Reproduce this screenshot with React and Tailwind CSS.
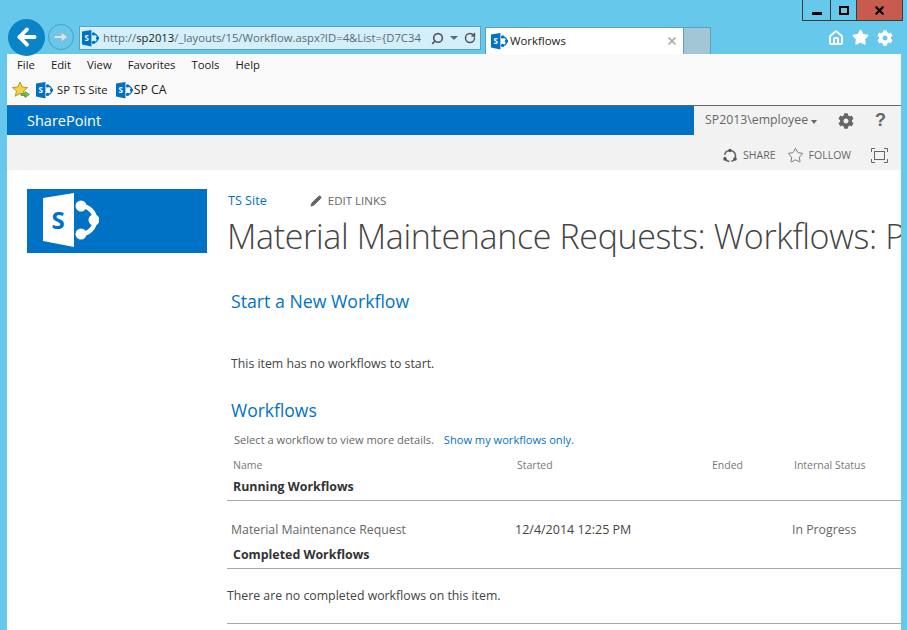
import React from 'react';
import { ArrowLeft, RotateCw, Search, X, Home, Star, Pencil } from 'lucide-react';
import { FaCog } from 'react-icons/fa';

// SharePoint mark: page with letter, plus the three linked dots
function SpLogo({ size = 16, bg = '#0072c6', fg = '#fff', fontSize = 26 }) {
  return (
    <svg width={size} height={size} viewBox="0 0 56 56">
      <path d="M0 5 L31 0 V54 L0 48 Z" fill={bg} />
      <path d="M38 13 A14 14 0 0 1 38 41" fill="none" stroke={bg} strokeWidth="4.5" />
      <circle cx="38" cy="13" r="5.5" fill={bg} />
      <circle cx="51" cy="27" r="5.5" fill={bg} />
      <circle cx="38" cy="41" r="5.5" fill={bg} />
      <text x="15" y="36" fontSize={fontSize} fontWeight="700" fill={fg} textAnchor="middle" fontFamily="Open Sans, sans-serif">S</text>
    </svg>
  );
}

function Section({ title }) {
  return <div className="font-bold text-[12.4px] text-[#333] pl-[6px] leading-[18px]">{title}</div>;
}

export default function App() {
  const sans = { fontFamily: '"Open Sans", sans-serif' };
  return (
    <div className="w-[907px] h-[630px] overflow-hidden bg-[#66c9eb] flex flex-col relative" style={sans}>
      {/* Window buttons */}
      <div className="absolute top-0 right-[4px] flex h-[21px] border border-t-0 border-[#3a3a3a]">
        <div className="w-[28px] flex items-end justify-center pb-[5px] border-r border-[#3a3a3a]"><div className="w-[10px] h-[3px] bg-black" /></div>
        <div className="w-[26px] flex items-center justify-center border-r border-[#3a3a3a]"><div className="w-[10px] h-[9px] border-2 border-black" /></div>
        <div className="w-[45px] bg-[#c75b50] flex items-center justify-center"><X size={13} strokeWidth={4} color="#000" /></div>
      </div>

      {/* Nav row */}
      <div className="h-[54px] flex items-end pl-[8px] shrink-0">
        <div className="flex items-center gap-[3px] mb-[-2px] h-[38px] relative z-10">
          <div className="w-[37px] h-[37px] rounded-full bg-[#0a84c6] flex items-center justify-center">
            <ArrowLeft size={26} strokeWidth={3.5} color="#fff" />
          </div>
          <div className="w-[26px] h-[26px] rounded-full border border-[#4f9cc0] flex items-center justify-center">
            <svg width="18" height="18" viewBox="0 0 18 18"><path d="M2 7.5 H9 V3.5 L16 9 L9 14.5 V10.5 H2 Z" fill="#cfe8f2" stroke="#8fb9cc" strokeWidth="1.2" /></svg>
          </div>
        </div>
        <div className="ml-[5px] mb-[4px] w-[402px] h-[24px] bg-[#d3f0fa] border border-[#5f9fbd] flex items-center pl-[2px] pr-[4px] text-[11.3px]">
          <SpLogo size={17} />
          <div className="ml-[4px] text-[#5d6a70] whitespace-nowrap flex-1 min-w-0">http://<span className="text-[#222]">sp2013</span>/_layouts/15/Workflow.aspx?ID=4&amp;List={'{'}D7C34</div>
          <Search size={13} strokeWidth={3} color="#555" className="-scale-x-100" />
          <div className="ml-[6px] w-0 h-0 border-x-[4px] border-x-transparent border-t-[4px] border-t-[#666]" />
          <RotateCw size={12} strokeWidth={3} color="#555" className="ml-[6px]" />
        </div>
        <div className="ml-[4px] w-[199px] h-[27px] bg-white border border-b-0 border-[#5f9fbd] flex items-center pl-[5px] pr-[5px] text-[11.4px] text-[#222]">
          <SpLogo size={17} />
          <span className="ml-[2px] flex-1">Workflows</span>
          <X size={12} strokeWidth={3.5} color="#aaa" />
        </div>
        <div className="w-[27px] h-[27px] bg-[#a3c6d6] border border-l-0 border-b-0 border-[#5f9fbd]" />
        <div className="flex items-center gap-[8px] ml-[117px] mb-[8px] text-white">
          <Home size={16} strokeWidth={3} />
          <Star size={17} fill="#fff" />
          <FaCog size={16} />
        </div>
      </div>

      {/* Browser content */}
      <div className="ml-[7px] mr-[6px] flex-1 bg-white flex flex-col min-h-0 relative">
        {/* Menu */}
        <div className="h-[51px] bg-[#f9f9f9] shrink-0 text-[11.3px] text-[#1a1a1a]">
          <div className="flex gap-[16px] pl-[10px] h-[22px] items-center">
            <span>File</span><span>Edit</span><span>View</span><span>Favorites</span><span>Tools</span><span>Help</span>
          </div>
          <div className="flex items-center pl-[5px] h-[24px] mt-[2px]">
            <svg width="18" height="18" viewBox="0 0 18 18">
              <path d="M8 1 L10.2 6 L15.5 6.5 L11.5 10 L12.7 15.3 L8 12.5 L3.3 15.3 L4.5 10 L.5 6.5 L5.8 6 Z" fill="#f3d34a" stroke="#b59a2a" />
              <path d="M9 12.5 H13 V10.5 L17.5 13.5 L13 16.5 V14.5 H9 Z" fill="#6cc24a" stroke="#3f8a2a" strokeWidth=".6" />
            </svg>
            <span className="ml-[6px] flex"><SpLogo size={17} /></span>
            <span className="ml-[4px]">SP TS Site</span>
            <span className="ml-[8px] flex"><SpLogo size={17} /></span>
            <span className="ml-[1px] text-[12.3px]">SP CA</span>
          </div>
        </div>
        {/* Suite bar */}
        <div className="h-[30px] shrink-0 flex bg-[#0072c6] border-t border-[#666]">
          <div className="flex-1 pl-[20px] text-white text-[14.5px] leading-[29px]">SharePoint</div>
          <div className="w-[207px] bg-[#f2f2f2] flex items-center pl-[11px] text-[12.3px] text-[#666]">
            <span>SP2013\employee</span>
            <div className="ml-[3px] mt-[2px] w-0 h-0 border-x-[3.5px] border-x-transparent border-t-[4px] border-t-[#666]" />
            <FaCog size={16} color="#666" className="ml-[21px]" />
            <span className="ml-[21px] text-[18px] font-bold text-[#666] [font-family:'Liberation_Sans',sans-serif]">?</span>
          </div>
        </div>
        {/* Ribbon */}
        <div className="h-[35px] shrink-0 bg-[#f2f2f2] flex items-center justify-end pr-[13px] pt-[6px] text-[10.5px] text-[#666]">
          <svg width="16" height="16" viewBox="0 0 16 16" className="mr-[5px]"><circle cx="8" cy="8" r="5.5" fill="none" stroke="#666" strokeWidth="1.6" strokeDasharray="7 2" /><circle cx="3" cy="11" r="1.8" fill="#555" /><circle cx="13" cy="11" r="1.8" fill="#555" /><circle cx="8" cy="2.5" r="1.8" fill="#555" /></svg>
          <span>SHARE</span>
          <Star size={17} strokeWidth={1.2} className="ml-[11px] mr-[5px]" />
          <span>FOLLOW</span>
          <svg width="17" height="15" viewBox="0 0 17 15" className="ml-[20px]" fill="none" stroke="#666"><rect x="3.5" y="3.5" width="10" height="8" /><path d="M.5 4V.5H4M13 .5h3.5V4M.5 11v3.5H4M13 14.5h3.5V11" /></svg>
        </div>
        {/* Page */}
        <div className="flex-1 flex min-h-0 overflow-hidden">
          <div className="w-[220px] shrink-0 pl-[20px] pt-[19px]">
            <div className="w-[180px] h-[64px] bg-[#0072c6] flex items-center pl-[16px]"><SpLogo size={56} bg="#fff" fg="#0072c6" fontSize={24} /></div>
          </div>
          <div className="flex-1 min-w-0 text-[#444]">
            <div className="flex items-center h-[18px] mt-[22px] text-[12.6px]">
              <span className="ml-[1px] text-[#0072c6]">TS Site</span>
              <Pencil size={12} fill="#666" color="#666" className="ml-[43px]" />
              <span className="ml-[6px] text-[11.5px] text-[#666]">EDIT LINKS</span>
            </div>
            <div className="text-[34px] tracking-[-0.35px] leading-[48px] whitespace-nowrap text-[#444] font-light mt-[2px]">Material Maintenance Requests: Workflows: P</div>
            <div className="ml-[4px] mt-[28px] text-[17.7px] leading-[26px] text-[#0072c6]">Start a New Workflow</div>
            <div className="ml-[4px] mt-[41px] text-[12.3px] leading-[18px]">This item has no workflows to start.</div>
            <div className="ml-[4px] mt-[24px] text-[17.5px] leading-[26px] text-[#0072c6]">Workflows</div>
            <div className="ml-[7px] mt-[9px] text-[11.1px] leading-[16px] text-[#666]">Select a workflow to view more details. <span className="ml-[7px] text-[#0072c6]">Show my workflows only.</span></div>
            <div className="grid grid-cols-[284px_195px_82px_1fr] mt-[9px] text-[10.5px] text-[#777] leading-[16px] pl-[6px]">
              <span>Name</span><span>Started</span><span>Ended</span><span>Internal Status</span>
            </div>
            <div className="mt-[5px]"><Section title="Running Workflows" /></div>
            <div className="border-b border-[#aaa] mt-[4px]" />
            <div className="grid grid-cols-[284px_277px_1fr] mt-[20px] text-[12.3px] leading-[18px] pl-[4px] text-[#666]">
              <span>Material Maintenance Request</span><span className="text-[#444] text-[12.5px]">12/4/2014 12:25 PM</span><span>In Progress</span>
            </div>
            <div className="mt-[7px]"><Section title="Completed Workflows" /></div>
            <div className="border-b border-[#aaa] mt-[4px]" />
            <div className="mt-[18px] text-[12.3px] leading-[18px]">There are no completed workflows on this item.</div>
            <div className="border-b border-[#aaa] mt-[18px]" />
          </div>
        </div>
      </div>
    </div>
  );
}
